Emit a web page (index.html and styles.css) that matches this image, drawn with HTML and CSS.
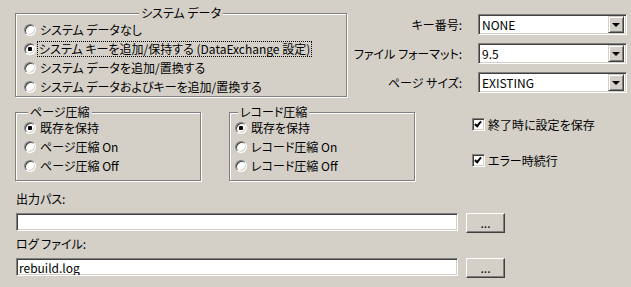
FILE: index.html
```html
<!DOCTYPE html>
<html lang="ja">
<head>
    <meta charset="UTF-8">
    <title>Rebuild</title>
    <link rel="stylesheet" href="styles.css">
</head>
<body>
    <div class="dialog">
        <div class="row-top">
            <fieldset class="group sys">
                <legend class="center">システム データ</legend>
                <div class="opt"><span class="radio"></span><span>システム データなし</span></div>
                <div class="opt"><span class="radio on"></span><span class="focus">システム キーを追加/保持する (DataExchange 設定)</span></div>
                <div class="opt"><span class="radio"></span><span>システム データを追加/置換する</span></div>
                <div class="opt"><span class="radio"></span><span>システム データおよびキーを追加/置換する</span></div>
            </fieldset>

            <div class="options">
                <label>キー番号:</label>
                <div class="combo"><span>NONE</span><span class="drop"></span></div>
                <label>ファイル フォーマット:</label>
                <div class="combo"><span>9.5</span><span class="drop"></span></div>
                <label>ページ サイズ:</label>
                <div class="combo"><span>EXISTING</span><span class="drop"></span></div>
            </div>
        </div>

        <div class="row-mid">
            <fieldset class="group small page">
                <legend>ページ圧縮</legend>
                <div class="opt"><span class="radio on"></span><span>既存を保持</span></div>
                <div class="opt"><span class="radio"></span><span>ページ圧縮 On</span></div>
                <div class="opt"><span class="radio"></span><span>ページ圧縮 Off</span></div>
            </fieldset>

            <fieldset class="group small record">
                <legend>レコード圧縮</legend>
                <div class="opt"><span class="radio on"></span><span>既存を保持</span></div>
                <div class="opt"><span class="radio"></span><span>レコード圧縮 On</span></div>
                <div class="opt"><span class="radio"></span><span>レコード圧縮 Off</span></div>
            </fieldset>

            <div class="checks">
                <div class="check"><span class="box"></span><span>終了時に設定を保存</span></div>
                <div class="check"><span class="box"></span><span>エラー時続行</span></div>
            </div>
        </div>

        <div class="paths">
            <label>出力パス:</label>
            <div class="path-row">
                <input class="field" type="text" value="">
                <button class="btn">...</button>
            </div>
            <label>ログ ファイル:</label>
            <div class="path-row">
                <input class="field" type="text" value="rebuild.log">
                <button class="btn">...</button>
            </div>
        </div>
    </div>
</body>
</html>
```

FILE: styles.css
```css
body {
    margin: 0;
    background-color: #d4d0c8;
    font-family: "Noto Sans CJK JP", "Liberation Sans", sans-serif;
    font-size: 12px;
    font-feature-settings: "palt";
    color: #000;
}

.dialog {
    width: 631px;
    height: 287px;
    overflow: hidden;
}

.row-top {
    display: flex;
    align-items: flex-start;
    padding-top: 6px;
}

/* etched group box */
.group {
    margin: 0;
    border: 1px solid #808080;
    box-shadow: 1px 1px 0 #fff, inset 1px 1px 0 #fff;
    min-width: 0;
}

.group legend {
    padding: 0 2px;
    line-height: 14px;
    background-color: #d4d0c8;
}

.group legend.center {
    margin: 0 auto;
}

.sys {
    margin-left: 15px;
    width: 332px;
    box-sizing: border-box;
    padding: 0 8px 0 8px;
}

.opt {
    display: flex;
    align-items: center;
    height: 19px;
    line-height: 14px;
}

.radio {
    position: relative;
    flex: none;
    width: 12px;
    height: 12px;
    box-sizing: border-box;
    border-radius: 50%;
    border: 1px solid;
    border-color: #808080 #fff #fff #808080;
    box-shadow: inset 1px 1px 0 #404040, inset -1px -1px 0 #d4d0c8;
    background-color: #fff;
    margin-right: 4px;
}

.radio.on::after {
    content: "";
    position: absolute;
    left: 3px;
    top: 3px;
    width: 4px;
    height: 4px;
    border-radius: 1px;
    background-color: #000;
}

.focus {
    outline: 1px dotted #000;
    outline-offset: 0;
    padding: 0 1px;
    margin-left: -2px;
}

.options {
    margin-left: auto;
    margin-right: 4px;
    margin-top: 8px;
    display: grid;
    grid-template-columns: auto 149px;
    column-gap: 16px;
    row-gap: 8px;
    align-items: center;
}

.options label {
    justify-self: end;
}

.combo {
    display: flex;
    align-items: center;
    justify-content: space-between;
    height: 21px;
    box-sizing: border-box;
    border: 1px solid;
    border-color: #808080 #fff #fff #808080;
    box-shadow: inset 1px 1px 0 #404040, inset -1px -1px 0 #d4d0c8;
    background-color: #fff;
    padding: 0 2px 0 3px;
}

.drop {
    position: relative;
    width: 16px;
    height: 17px;
    box-sizing: border-box;
    background-color: #d4d0c8;
    border: 1px solid;
    border-color: #d4d0c8 #404040 #404040 #d4d0c8;
    box-shadow: inset 1px 1px 0 #fff, inset -1px -1px 0 #808080;
}

.drop::after {
    content: "";
    position: absolute;
    left: 3px;
    top: 6px;
    border-left: 4px solid transparent;
    border-right: 4px solid transparent;
    border-top: 4px solid #000;
}

.row-mid {
    display: flex;
    align-items: flex-start;
    margin-top: 9px;
}

.small {
    width: 186px;
    box-sizing: border-box;
    padding-top: 0;
    padding-bottom: 5px;
}

.small legend {
    line-height: 12px;
}

.page {
    margin-left: 15px;
    padding-left: 8px;
}

.page legend {
    margin-left: 4px;
}

.record {
    margin-left: 28px;
    padding-left: 5px;
}

.record legend {
    margin-left: 3px;
}

.checks {
    margin-left: 57px;
    padding-top: 11px;
    display: flex;
    flex-direction: column;
    gap: 22px;
}

.check {
    display: flex;
    align-items: center;
    height: 14px;
}

.box {
    position: relative;
    width: 13px;
    height: 13px;
    box-sizing: border-box;
    border: 1px solid;
    border-color: #808080 #fff #fff #808080;
    box-shadow: inset 1px 1px 0 #404040, inset -1px -1px 0 #d4d0c8;
    background-color: #fff;
    margin-right: 3px;
}

.box::after {
    content: "";
    position: absolute;
    left: 3px;
    top: 1px;
    width: 2px;
    height: 5px;
    border: solid #000;
    border-width: 0 2px 2px 0;
    transform: rotate(40deg);
}

.paths {
    padding-left: 16px;
    padding-top: 11px;
}

.paths label {
    display: block;
    line-height: 14px;
}

.path-row {
    display: flex;
    align-items: flex-start;
    gap: 8px;
    margin-top: 7px;
    margin-bottom: 4px;
}

.field {
    width: 442px;
    height: 18px;
    box-sizing: border-box;
    margin: 0;
    padding: 0 2px;
    font: inherit;
    border: 1px solid;
    border-color: #808080 #fff #fff #808080;
    box-shadow: inset 1px 1px 0 #404040, inset -1px -1px 0 #d4d0c8;
    background-color: #fff;
    outline: none;
}

.btn {
    width: 39px;
    height: 20px;
    box-sizing: border-box;
    margin: 0;
    padding: 0;
    font: inherit;
    line-height: 14px;
    background-color: #d4d0c8;
    border: 1px solid;
    border-color: #fff #404040 #404040 #fff;
    box-shadow: inset -1px -1px 0 #808080;
}
```
